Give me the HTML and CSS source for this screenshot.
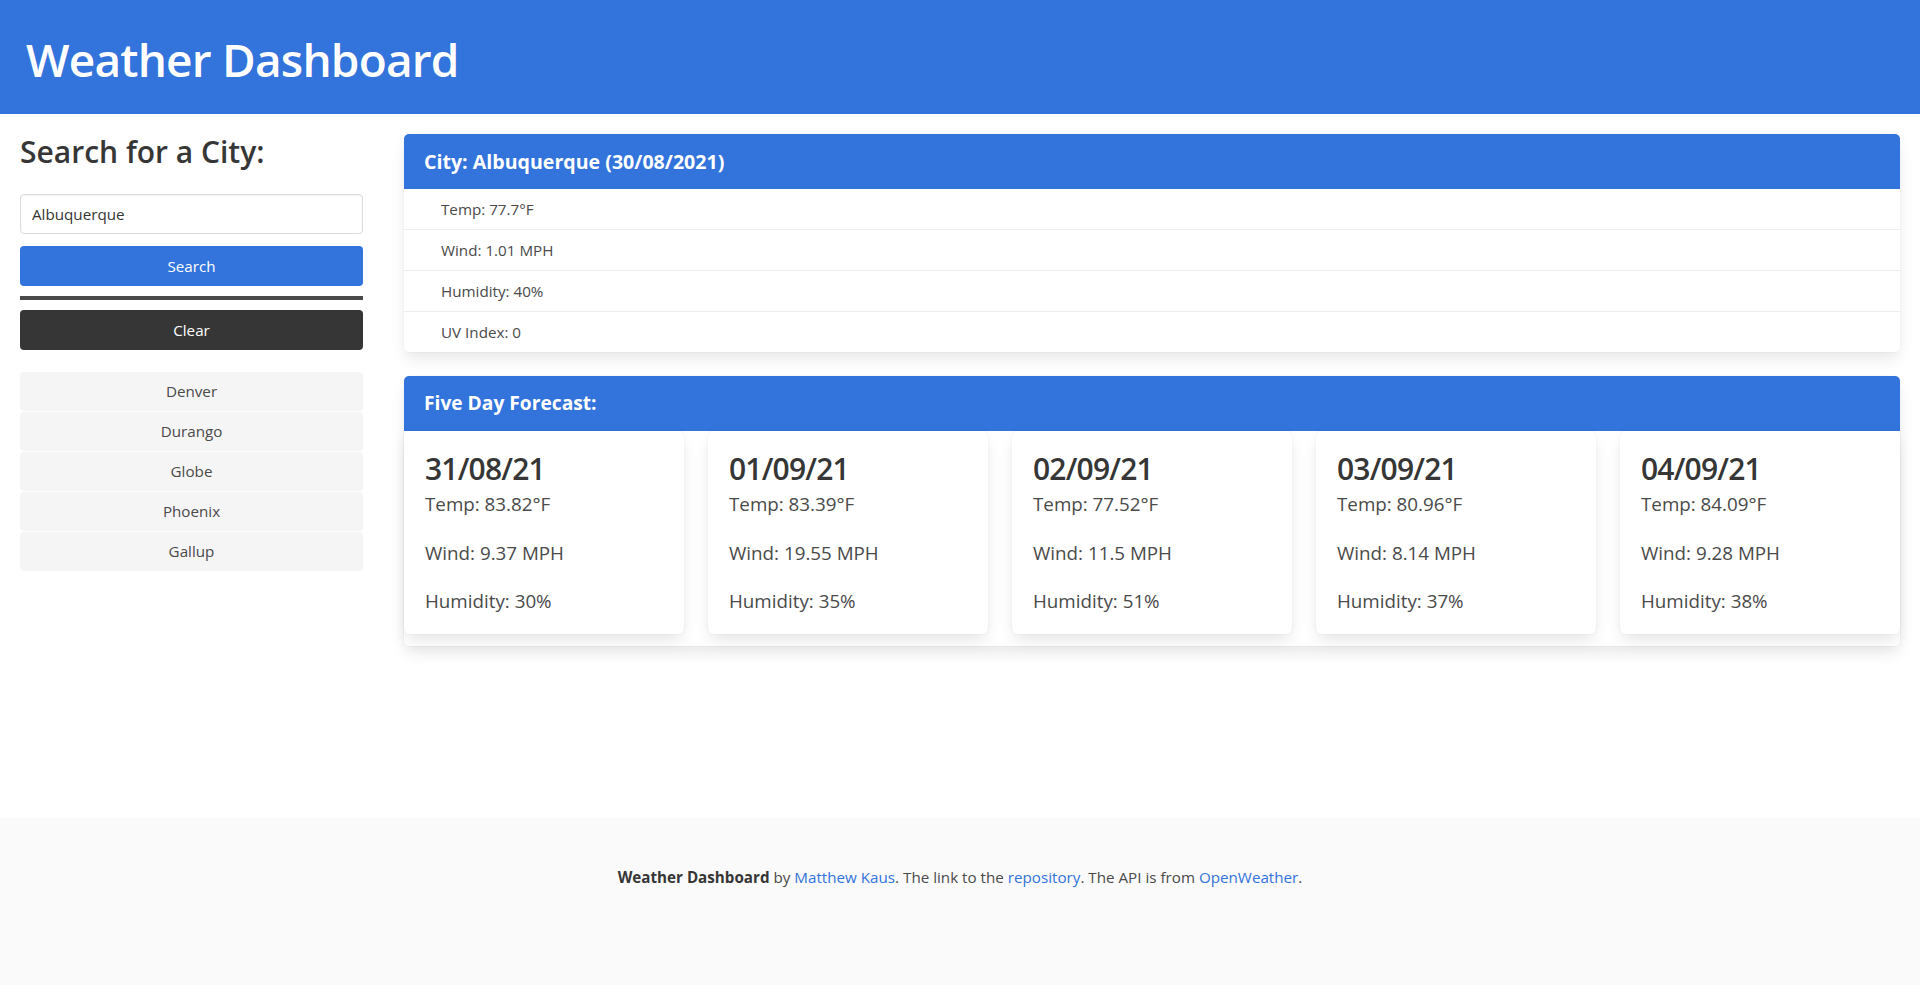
FILE: index.html
```html
<!DOCTYPE html>
<html lang="en">
<head>
<meta charset="utf-8">
<title>Weather Dashboard</title>
<link rel="stylesheet" href="styles.css">
</head>
<body>
<header class="site-header">
  <h1 class="site-title">Weather Dashboard</h1>
</header>
<main class="main">
  <aside class="sidebar">
    <h2 class="sidebar-title">Search for a City:</h2>
    <input class="search-input" type="text" value="Albuquerque">
    <button class="btn btn-primary">Search</button>
    <hr class="divider">
    <button class="btn btn-dark">Clear</button>
    <ul class="history">
      <li class="history-item">Denver</li>
      <li class="history-item">Durango</li>
      <li class="history-item">Globe</li>
      <li class="history-item">Phoenix</li>
      <li class="history-item">Gallup</li>
    </ul>
  </aside>
  <section class="content">
    <div class="card current">
      <div class="card-header card-header-city">City: Albuquerque (30/08/2021)</div>
      <ul class="current-list">
        <li class="current-row">Temp: 77.7°F</li>
        <li class="current-row">Wind: 1.01 MPH</li>
        <li class="current-row">Humidity: 40%</li>
        <li class="current-row">UV Index: 0</li>
      </ul>
    </div>
    <div class="card forecast">
      <div class="card-header">Five Day Forecast:</div>
      <div class="forecast-row">
        <div class="day-card">
          <h3 class="day-date">31/08/21</h3>
          <p class="day-line">Temp: 83.82°F</p>
          <p class="day-line">Wind: 9.37 MPH</p>
          <p class="day-line">Humidity: 30%</p>
        </div>
        <div class="day-card">
          <h3 class="day-date">01/09/21</h3>
          <p class="day-line">Temp: 83.39°F</p>
          <p class="day-line">Wind: 19.55 MPH</p>
          <p class="day-line">Humidity: 35%</p>
        </div>
        <div class="day-card">
          <h3 class="day-date">02/09/21</h3>
          <p class="day-line">Temp: 77.52°F</p>
          <p class="day-line">Wind: 11.5 MPH</p>
          <p class="day-line">Humidity: 51%</p>
        </div>
        <div class="day-card">
          <h3 class="day-date">03/09/21</h3>
          <p class="day-line">Temp: 80.96°F</p>
          <p class="day-line">Wind: 8.14 MPH</p>
          <p class="day-line">Humidity: 37%</p>
        </div>
        <div class="day-card">
          <h3 class="day-date">04/09/21</h3>
          <p class="day-line">Temp: 84.09°F</p>
          <p class="day-line">Wind: 9.28 MPH</p>
          <p class="day-line">Humidity: 38%</p>
        </div>
      </div>
    </div>
  </section>
</main>
<footer class="site-footer">
  <p><strong>Weather Dashboard</strong> by <a href="#">Matthew Kaus</a>. The link to the <a href="#">repository</a>. The API is from <a href="#">OpenWeather</a>.</p>
</footer>
</body>
</html>
```
FILE: styles.css
```css
* { box-sizing: border-box; }
html, body { margin: 0; padding: 0; }
body {
  font-family: "Open Sans", "Noto Sans", "Liberation Sans", sans-serif;
  color: #4a4a4a;
  font-size: 15.2px;
  line-height: 1.5;
  min-height: 100vh;
  display: flex;
  flex-direction: column;
  background: #fff;
}
.site-header {
  background: #3273dc;
  height: 114px;
  padding: 32px 26px 0;
}
.site-title {
  margin: 0;
  color: #fff;
  font-size: 46px;
  font-weight: 600;
  line-height: 54px;
  letter-spacing: -0.8px;
}
.main {
  flex: 1;
  display: flex;
  gap: 41px;
  padding: 20px 20px 0;
  align-items: flex-start;
}
.sidebar {
  width: 343px;
  flex: none;
  display: flex;
  flex-direction: column;
}
.sidebar-title {
  margin: 0 0 24px;
  font-size: 30px;
  font-weight: 600;
  line-height: 36px;
  color: #363636;
}
.search-input {
  height: 40px;
  width: 100%;
  margin: 0 0 12px;
  padding: 0 11px;
  border: 1px solid #dbdbdb;
  border-radius: 4px;
  box-shadow: inset 0 1px 2px rgba(10,10,10,0.05);
  font: inherit;
  color: #363636;
  font-size: 15.2px;
}
.btn {
  height: 40px;
  width: 100%;
  border: none;
  border-radius: 4px;
  color: #fff;
  font: inherit;
  font-size: 15.2px;
  cursor: pointer;
}
.btn-primary { background: #3273dc; margin-bottom: 10px; }
.btn-dark { background: #363636; margin-bottom: 22px; }
.divider {
  height: 4px;
  border: none;
  margin: 0 0 10px;
  background: #4a4a4a;
}
.history { list-style: none; margin: 0; padding: 0; }
.history-item {
  height: 39px;
  margin-bottom: 1px;
  background: #f5f5f5;
  border-radius: 4px;
  display: flex;
  align-items: center;
  justify-content: center;
  color: #4a4a4a;
}
.content { flex: 1; min-width: 0; }
.card {
  background: #fff;
  border-radius: 5px;
  box-shadow: 0 8px 16px -2px rgba(10,10,10,0.1), 0 0 0 1px rgba(10,10,10,0.02);
  margin-bottom: 24px;
}
.card-header {
  height: 55px;
  background: #3273dc;
  color: #fff;
  font-size: 19.2px;
  font-weight: 700;
  display: flex;
  align-items: center;
  padding: 0 20px;
  border-radius: 5px 5px 0 0;
}
.card-header-city { font-size: 19.6px; }
.current-list { list-style: none; margin: 0; padding: 0; }
.current-row {
  height: 40px;
  display: flex;
  align-items: center;
  padding-left: 37px;
}
.current-row + .current-row { border-top: 1px solid #ededed; height: 41px; }
.forecast-row {
  display: flex;
  gap: 24px;
  padding-bottom: 12px;
}
.day-card {
  flex: 1;
  height: 203px;
  padding: 20px 21px 0;
  border-radius: 6px;
  background: #fff;
  box-shadow: 0 8px 16px -2px rgba(10,10,10,0.1), 0 0 0 1px rgba(10,10,10,0.02);
}
.day-date {
  margin: 0 0 2px;
  font-size: 30px;
  font-weight: 600;
  line-height: 36px;
  letter-spacing: -0.8px;
  color: #363636;
}
.day-line {
  margin: 0 0 18px;
  font-size: 18.8px;
  line-height: 30px;
}
.day-line:nth-of-type(1) { margin-bottom: 19px; }
.site-footer {
  background: #fafafa;
  padding: 48px 24px 96px;
  text-align: center;
}
.site-footer p { margin: 0; }
.site-footer strong { color: #363636; font-weight: 700; }
.site-footer a { color: #3273dc; text-decoration: none; }
```
